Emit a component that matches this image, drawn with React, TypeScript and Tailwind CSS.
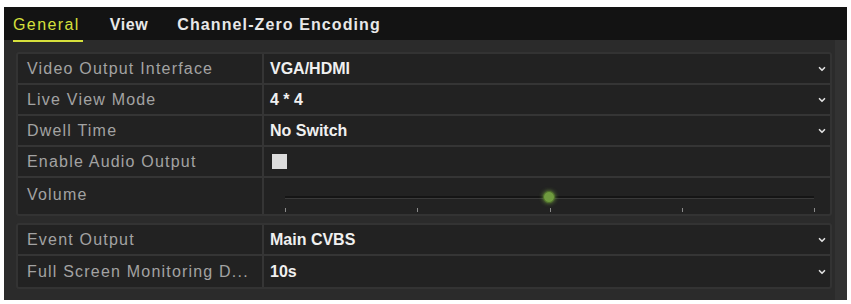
import { ChevronDown } from 'lucide-react';

type Row = { label: string; value?: string; kind: 'select' | 'check' | 'slider' };

const groupOne: Row[] = [
  { label: 'Video Output Interface', value: 'VGA/HDMI', kind: 'select' },
  { label: 'Live View Mode', value: '4 * 4', kind: 'select' },
  { label: 'Dwell Time', value: 'No Switch', kind: 'select' },
  { label: 'Enable Audio Output', kind: 'check' },
  { label: 'Volume', kind: 'slider' },
];

const groupTwo: Row[] = [
  { label: 'Event Output', value: 'Main CVBS', kind: 'select' },
  { label: 'Full Screen Monitoring D...', value: '10s', kind: 'select' },
];

const ticks = [0, 25, 50, 75, 100];

function Slider() {
  return (
    <div className="relative h-full w-full">
      <div className="absolute left-[15px] right-[13px] top-[18px] h-[3px] bg-[#151515] border-b border-[#3a3a3a]" />
      {ticks.map(t => (
        <div
          key={t}
          className="absolute top-[30px] h-[4px] w-[1px] bg-[#8a8a8a]"
          style={{ left: `calc(15px + (100% - 28px) * ${t / 100})` }}
        />
      ))}
      <div className="absolute left-[273px] top-[13px] h-[12px] w-[12px] rounded-full bg-[#6f9a3f] border border-[#4d6e2a] shadow-[0_0_4px_#6f9a3f]" />
    </div>
  );
}

function TableRow({ row, last }: { row: Row; last: boolean }) {
  const tall = row.kind === 'slider';
  return (
    <div className={`flex ${tall ? 'h-[36px]' : 'h-[31px]'} ${last ? '' : 'border-b-2 border-[#353535]'}`}>
      <div className={`w-[246px] shrink-0 flex ${tall ? 'items-start pt-[5px]' : 'items-center'} pl-[9px] text-[#a3a3a3] tracking-[1.2px] border-r-2 border-[#353535]`}>
        {row.label}
      </div>
      <div className="flex-1 flex items-center pl-[6px] pr-[3px] text-[#f0f0f0] font-bold">
        {row.kind === 'select' && (
          <>
            <span className="flex-1">{row.value}</span>
            <ChevronDown size={10} strokeWidth={4} className="text-[#e0e0e0]" />
          </>
        )}
        {row.kind === 'check' && <div className="h-[15px] w-[15px] bg-[#dcdcdc] ml-[2px]" />}
        {row.kind === 'slider' && <Slider />}
      </div>
    </div>
  );
}

function Group({ rows }: { rows: Row[] }) {
  return (
    <div className="w-[816px] bg-[#222222] border-2 border-[#333333] rounded-[3px]">
      {rows.map((r, i) => (
        <TableRow key={r.label} row={r} last={i === rows.length - 1} />
      ))}
    </div>
  );
}

export default function App() {
  return (
    <div className="w-[851px] h-[304px] bg-white pt-[7px] pl-[4px]" style={{ fontFamily: '"Liberation Sans", Arial, sans-serif' }}>
      <div className="w-[843px] h-[293px] flex flex-col text-[16px]">
        <div className="h-[33px] bg-[#131313] flex items-center pl-[9px] pt-[3px] text-[16px]">
          <span className="relative text-[#d6e03c] tracking-[1.4px]">
            General
            <span className="absolute left-0 right-[-3px] bottom-[-5px] h-[2px] bg-[#d6e03c]" />
          </span>
          <span className="ml-[30px] text-[#e8e8e8] font-bold tracking-[0.6px]">View</span>
          <span className="ml-[29px] text-[#e8e8e8] font-bold tracking-[1.1px]">Channel-Zero Encoding</span>
        </div>
        <div className="flex-1 bg-[#2b2b2b] border-r-[12px] border-[#323232] pl-[12px] pt-[12px] flex flex-col gap-[7px]">
          <Group rows={groupOne} />
          <Group rows={groupTwo} />
        </div>
      </div>
    </div>
  );
}
